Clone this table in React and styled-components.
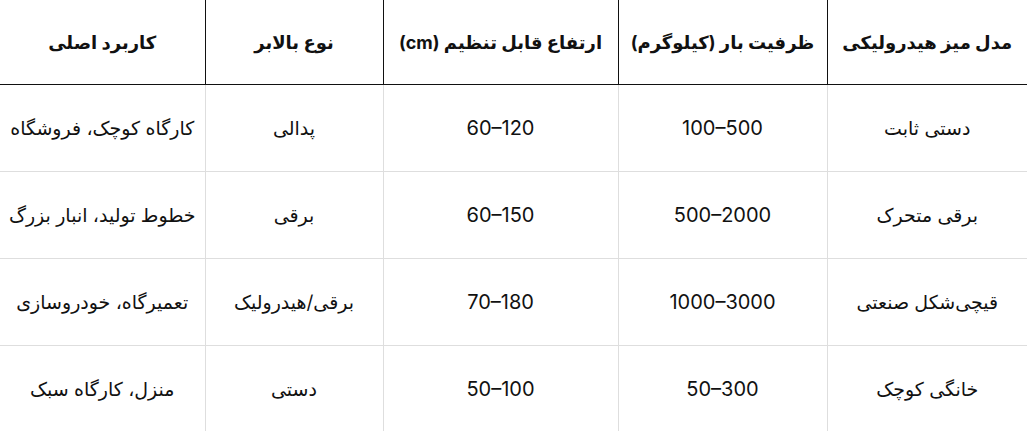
import React from 'react';
import styled, { createGlobalStyle } from 'styled-components';

const GlobalStyle = createGlobalStyle`
  html, body {
    margin: 0;
    padding: 0;
    background: #fff;
  }

  body {
    font-family: "Inter", "DejaVu Sans", sans-serif;
    color: #111;
  }
`;

const Table = styled.table`
  direction: rtl;
  width: 1027px;
  border-collapse: collapse;
  table-layout: fixed;
`;

const HeadCell = styled.th`
  height: 84px;
  padding: 0 6px;
  font-size: 18px;
  font-weight: 700;
  color: #111;
  text-align: center;
  white-space: nowrap;
  border-bottom: 1px solid #111;
  border-left: 1px solid #111;

  &:last-child {
    border-left: none;
  }
`;

const Cell = styled.td`
  height: 86px;
  padding: 0 4px;
  font-size: ${({ $numeric }) => ($numeric ? '20px' : '19px')};
  font-weight: 400;
  color: #111;
  text-align: center;
  white-space: nowrap;
  border-bottom: 1px solid #dedede;
  border-left: 1px solid #dedede;

  &:last-child {
    border-left: none;
  }
`;

const columns = [
  { title: 'مدل میز هیدرولیکی', width: 200 },
  { title: 'ظرفیت بار (کیلوگرم)', width: 209, numeric: true },
  { title: 'ارتفاع قابل تنظیم (cm)', width: 235, numeric: true },
  { title: 'نوع بالابر', width: 178 },
  { title: 'کاربرد اصلی', width: 205 },
];

const rows = [
  ['دستی ثابت', '100–500', '60–120', 'پدالی', 'کارگاه کوچک، فروشگاه'],
  ['برقی متحرک', '500–2000', '60–150', 'برقی', 'خطوط تولید، انبار بزرگ'],
  ['قیچی‌شکل صنعتی', '1000–3000', '70–180', 'برقی/هیدرولیک', 'تعمیرگاه، خودروسازی'],
  ['خانگی کوچک', '50–300', '50–100', 'دستی', 'منزل، کارگاه سبک'],
];

const App = () => (
  <>
    <GlobalStyle />
    <Table>
      <colgroup>
        {columns.map(col => (
          <col key={col.title} style={{ width: col.width }} />
        ))}
      </colgroup>
      <thead>
        <tr>
          {columns.map(col => (
            <HeadCell key={col.title}>{col.title}</HeadCell>
          ))}
        </tr>
      </thead>
      <tbody>
        {rows.map(row => (
          <tr key={row[0]}>
            {row.map((value, i) => (
              <Cell key={i} $numeric={columns[i].numeric}>
                <bdi>{value}</bdi>
              </Cell>
            ))}
          </tr>
        ))}
      </tbody>
    </Table>
  </>
);

export default App;
